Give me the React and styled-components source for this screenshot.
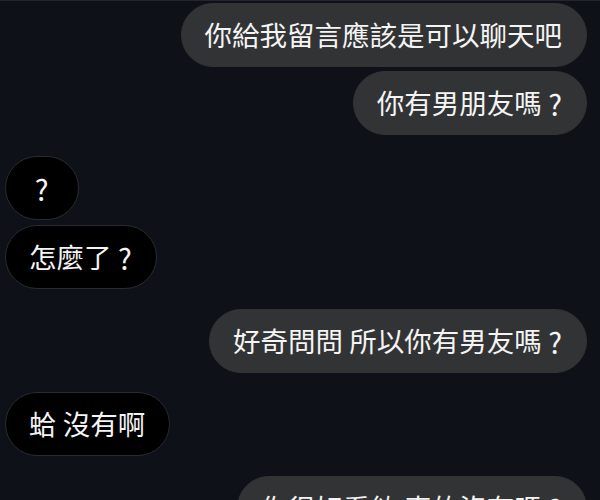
import React from 'react';
import styled, { createGlobalStyle } from 'styled-components';

const GlobalStyle = createGlobalStyle`
    html, body {
        margin: 0;
        padding: 0;
        background: #0e1117;
    }
`

const Screen = styled.div`
    width: 600px;
    height: 500px;
    overflow: hidden;
    background: #0e1117;
    border-top: 1px solid #22252b;
    box-sizing: border-box;
    font-family: "Noto Sans CJK TC", "Noto Sans", sans-serif;
`

const Thread = styled.div`
    display: flex;
    flex-direction: column;
    padding: 2px 13px 0 5px;
`

const Row = styled.div`
    display: flex;
    justify-content: ${p => (p.mine ? 'flex-end' : 'flex-start')};
    margin-top: ${p => p.gap}px;
`

const Bubble = styled.div`
    box-sizing: border-box;
    height: 64px;
    min-width: ${p => p.minWidth || 0}px;
    padding: 0 24px 0 23px;
    display: flex;
    align-items: center;
    justify-content: center;
    border-radius: 32px;
    font-size: 27.5px;
    line-height: 1;
    color: #f4f4f4;
    white-space: pre;
    background: ${p => (p.mine ? '#323335' : '#000')};
    border: 1px solid ${p => (p.mine ? '#323335' : '#2a2b2e')};
`

const Ask = styled.span`
    font-size: 29px;
`

const messages = [
    { mine: true, gap: 0, text: '你給我留言應該是可以聊天吧' },
    { mine: true, gap: 4, text: '你有男朋友嗎', ask: true },
    { mine: false, gap: 21, text: '', ask: true, minWidth: 74 },
    { mine: false, gap: 5, text: '怎麼了', ask: true },
    { mine: true, gap: 20, text: '好奇問問 所以你有男友嗎', ask: true },
    { mine: false, gap: 19, text: '蛤 沒有啊' },
    { mine: true, gap: 20, text: '你很好看欸 真的沒有嗎', ask: true },
];

export default function App() {
    return (
        <>
            <GlobalStyle />
            <Screen>
                <Thread>
                    {messages.map((m, i) => (
                        <Row key={i} mine={m.mine} gap={m.gap}>
                            <Bubble mine={m.mine} minWidth={m.minWidth}>
                                {m.text}
                                {m.ask && <Ask>{m.text ? ' ?' : '?'}</Ask>}
                            </Bubble>
                        </Row>
                    ))}
                </Thread>
            </Screen>
        </>
    );
}
